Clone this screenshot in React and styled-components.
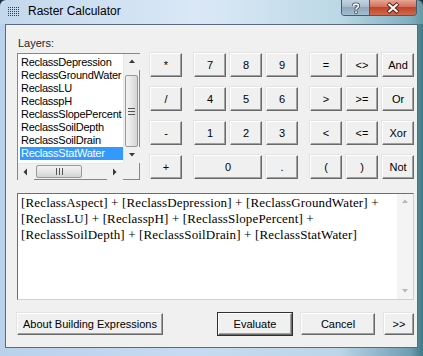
import React from "react";
import styled, { createGlobalStyle } from "styled-components";

const GlobalStyle = createGlobalStyle`
  html, body {
    margin: 0;
    padding: 0;
    background: #1c3440;
  }
  body {
    font-family: "Liberation Sans", Arial, sans-serif;
  }
`;

const layers = [
  "ReclassDepression",
  "ReclassGroundWater",
  "ReclassLU",
  "ReclasspH",
  "ReclassSlopePercent",
  "ReclassSoilDepth",
  "ReclassSoilDrain",
  "ReclassStatWater",
];

const mathKeys = ["*", "/", "-", "+"];
const numberKeys = [
  { label: "7" }, { label: "8" }, { label: "9" },
  { label: "4" }, { label: "5" }, { label: "6" },
  { label: "1" }, { label: "2" }, { label: "3" },
  { label: "0", span: 2 }, { label: "." },
];
const logicKeys = ["=", "<>", "And", ">", ">=", "Or", "<", "<=", "Xor", "(", ")", "Not"];

const expression =
  "[ReclassAspect] + [ReclassDepression] + [ReclassGroundWater] + [ReclassLU] + [ReclasspH] + [ReclassSlopePercent] + [ReclassSoilDepth] + [ReclassSoilDrain] + [ReclassStatWater]";

class App extends React.Component {
  render() {
    return (
      <>
        <GlobalStyle />
        <Window>
          <TitleBar>
            <TitleIcon viewBox="0 0 12 11">
              {[0, 1, 2, 3, 4].map((r) =>
                [0, 1, 2, 3, 4, 5].map((c) => (
                  <rect key={r + "-" + c} x={c * 2} y={r * 2 + 1} width="1" height="1" fill="#3c3c3c" />
                ))
              )}
            </TitleIcon>
            <TitleText>Raster Calculator</TitleText>
            <CaptionButtons>
              <HelpButton>
                <svg width="12" height="12" viewBox="0 0 12 12">
                  <path
                    d="M3.5 4 C3.5 1.5 8.5 1.5 8.5 4 C8.5 5.6 6 5.6 6 7.5"
                    fill="none"
                    stroke="#3a4a5c"
                    strokeWidth="3.2"
                  />
                  <rect x="4.4" y="8.6" width="3.2" height="3" fill="#3a4a5c" />
                  <path
                    d="M3.5 4 C3.5 1.5 8.5 1.5 8.5 4 C8.5 5.6 6 5.6 6 7.5"
                    fill="none"
                    stroke="#fff"
                    strokeWidth="1.6"
                  />
                  <rect x="5.2" y="9.2" width="1.6" height="1.8" fill="#fff" />
                </svg>
              </HelpButton>
              <CloseButton>
                <svg width="14" height="12" viewBox="0 0 14 12">
                  <path d="M2 1.5 L12 10.5 M12 1.5 L2 10.5" stroke="#5a1a10" strokeWidth="4" />
                  <path d="M2.5 2 L11.5 10 M11.5 2 L2.5 10" stroke="#fff" strokeWidth="2.2" />
                </svg>
              </CloseButton>
            </CaptionButtons>
          </TitleBar>
          <FrameBody>
            <Client>
              <FieldLabel>Layers:</FieldLabel>
              <TopSection>
                <ListBox>
                  <ListItems>
                    {layers.map((name, i) => (
                      <ListItem key={name} $selected={i === layers.length - 1}>
                        {name}
                      </ListItem>
                    ))}
                  </ListItems>
                  <VScroll>
                    <ArrowBox>
                      <Arrow dir="up" />
                    </ArrowBox>
                    <VTrack>
                      <VThumb>
                        <GripV />
                      </VThumb>
                    </VTrack>
                    <ArrowBox>
                      <Arrow dir="down" />
                    </ArrowBox>
                  </VScroll>
                  <HScroll>
                    <ArrowBox>
                      <Arrow dir="left" />
                    </ArrowBox>
                    <HTrack>
                      <HThumb>
                        <GripH />
                      </HThumb>
                    </HTrack>
                    <ArrowBox>
                      <Arrow dir="right" />
                    </ArrowBox>
                  </HScroll>
                  <Corner />
                </ListBox>
                <KeyPad>
                  <KeyGroup $cols={1}>
                    {mathKeys.map((k) => (
                      <Key key={k}>{k}</Key>
                    ))}
                  </KeyGroup>
                  <KeyGroup $cols={3}>
                    {numberKeys.map((k) => (
                      <Key key={k.label} $span={k.span}>
                        {k.label}
                      </Key>
                    ))}
                  </KeyGroup>
                  <KeyGroup $cols={3}>
                    {logicKeys.map((k) => (
                      <Key key={k}>{k}</Key>
                    ))}
                  </KeyGroup>
                </KeyPad>
              </TopSection>
              <ExpressionBox>
                <ExpressionText>{expression}</ExpressionText>
                <TextScroll>
                  <ArrowBox $flat>
                    <Arrow dir="up" color="#b8b8b8" />
                  </ArrowBox>
                  <ArrowBox $flat>
                    <Arrow dir="down" color="#b8b8b8" />
                  </ArrowBox>
                </TextScroll>
              </ExpressionBox>
              <ButtonRow>
                <DialogButton $width={146}>About Building Expressions</DialogButton>
                <Spacer />
                <DialogButton $width={74} $default>Evaluate</DialogButton>
                <DialogButton $width={74}>Cancel</DialogButton>
                <DialogButton $width={30}>&gt;&gt;</DialogButton>
              </ButtonRow>
            </Client>
          </FrameBody>
        </Window>
      </>
    );
  }
}

function Arrow({ dir, color = "#3a3a3a" }) {
  const paths = {
    up: "M1 5 L4 1.5 L7 5 Z",
    down: "M1 2 L4 5.5 L7 2 Z",
    left: "M5 0.5 L1.5 4 L5 7.5 Z",
    right: "M2 0.5 L5.5 4 L2 7.5 Z",
  };
  return (
    <svg width="8" height="8" viewBox="0 0 8 8">
      <path d={paths[dir]} fill={color} />
    </svg>
  );
}

const Window = styled.div`
  width: 423px;
  height: 356px;
  display: flex;
  flex-direction: column;
  background: linear-gradient(90deg, #b9d1ea 0%, #c6dbf1 45%, #bcd6e8 80%, #6f9db3 97%, #3f7a86 100%);
  border-radius: 6px 6px 0 0;
  overflow: hidden;
`;

const TitleBar = styled.div`
  height: 24px;
  display: flex;
  align-items: flex-start;
  flex-shrink: 0;
  background: linear-gradient(90deg, rgba(255,255,255,0.15) 0%, rgba(255,255,255,0.35) 50%, rgba(150,200,210,0.4) 100%);
`;

const TitleIcon = styled.svg`
  width: 12px;
  height: 11px;
  margin: 6px 0 0 8px;
`;

const TitleText = styled.div`
  margin: 4px 0 0 8px;
  font-family: "Liberation Sans", Arial, sans-serif;
  font-size: 12px;
  line-height: 15px;
  color: #000;
`;

const CaptionButtons = styled.div`
  margin-left: auto;
  margin-right: 6px;
  display: flex;
  height: 15px;
  border: 1px solid #4a5a6e;
  border-top: none;
  border-radius: 0 0 4px 4px;
  overflow: hidden;
`;

const HelpButton = styled.div`
  width: 27px;
  display: flex;
  align-items: center;
  justify-content: center;
  background: linear-gradient(180deg, #c5d4e2 0%, #a9bccf 45%, #8ea6ba 50%, #a4c0cf 100%);
  border-right: 1px solid #4a5a6e;
`;

const CloseButton = styled.div`
  width: 46px;
  display: flex;
  align-items: center;
  justify-content: center;
  background: linear-gradient(180deg, #e8a493 0%, #d2735c 45%, #c0432a 50%, #d06a4c 100%);
`;

const FrameBody = styled.div`
  flex: 1;
  display: flex;
  padding: 0 7px 8px 5px;
  min-height: 0;
`;

const Client = styled.div`
  flex: 1;
  display: flex;
  flex-direction: column;
  background: #f0f0f0;
  border: 1px solid #5b6b7e;
  padding: 12px 3px 12px 11px;
  font-family: "Liberation Sans", Arial, sans-serif;
  font-size: 11px;
  color: #000;
`;

const FieldLabel = styled.div`
  height: 13px;
  line-height: 13px;
  margin: 0 0 3px 1px;
  color: #1e1e1e;
`;

const TopSection = styled.div`
  display: flex;
  height: 127px;
`;

const ListBox = styled.div`
  width: 123px;
  height: 127px;
  box-sizing: border-box;
  border: 1px solid #828790;
  background: #fff;
  display: grid;
  grid-template-columns: 1fr 16px;
  grid-template-rows: 1fr 16px;
`;

const ListItems = styled.div`
  padding: 2px 0 0 2px;
  overflow: hidden;
`;

const ListItem = styled.div`
  height: 13px;
  line-height: 13px;
  padding-left: 1px;
  white-space: nowrap;
  font-size: 11px;
  letter-spacing: -0.25px;
  background: ${(p) => (p.$selected ? "#3399ff" : "transparent")};
  color: ${(p) => (p.$selected ? "#fff" : "#000")};
`;

const VScroll = styled.div`
  display: flex;
  flex-direction: column;
  background: #f0f0f0;
  border-left: 1px solid #e8e8e8;
`;

const ArrowBox = styled.div`
  height: 16px;
  width: 16px;
  flex-shrink: 0;
  display: flex;
  align-items: center;
  justify-content: center;
  background: ${(p) => (p.$flat ? "#f4f4f4" : "#f0f0f0")};
`;

const VTrack = styled.div`
  flex: 1;
  padding: 5px 0 0 0;
  display: flex;
  justify-content: center;
`;

const VThumb = styled.div`
  width: 13px;
  height: 72px;
  box-sizing: border-box;
  border: 1px solid #999;
  border-radius: 2px;
  background: linear-gradient(90deg, #f3f3f3 0%, #e6e6e6 50%, #d4d4d4 100%);
  display: flex;
  align-items: center;
  justify-content: center;
`;

const GripV = styled.div`
  width: 7px;
  height: 5px;
  border-top: 1px solid #555;
  border-bottom: 1px solid #555;
  &::after {
    content: "";
    display: block;
    margin-top: 2px;
    border-top: 1px solid #555;
  }
`;

const HScroll = styled.div`
  display: flex;
  background: #f0f0f0;
  border-top: 1px solid #e8e8e8;
`;

const HTrack = styled.div`
  flex: 1;
  display: flex;
  align-items: center;
  padding-left: 2px;
`;

const HThumb = styled.div`
  width: 46px;
  height: 13px;
  box-sizing: border-box;
  border: 1px solid #999;
  border-radius: 2px;
  background: linear-gradient(180deg, #f3f3f3 0%, #e6e6e6 50%, #d4d4d4 100%);
  display: flex;
  align-items: center;
  justify-content: center;
`;

const GripH = styled.div`
  width: 5px;
  height: 7px;
  border-left: 1px solid #555;
  border-right: 1px solid #555;
  &::after {
    content: "";
    display: block;
    margin-left: 2px;
    height: 7px;
    border-left: 1px solid #555;
  }
`;

const Corner = styled.div`
  background: #f0f0f0;
`;

const KeyPad = styled.div`
  display: flex;
  gap: 12px;
  margin-left: 10px;
`;

const KeyGroup = styled.div`
  display: grid;
  grid-template-columns: repeat(${(p) => p.$cols}, 32px);
  grid-auto-rows: 24px;
  column-gap: 4px;
  row-gap: 10px;
`;

const Key = styled.div`
  grid-column: span ${(p) => p.$span || 1};
  display: flex;
  align-items: center;
  justify-content: center;
  background: #f0f0f0;
  border-top: 1px solid #fff;
  border-left: 1px solid #fff;
  border-right: 1px solid #696969;
  border-bottom: 1px solid #696969;
  box-shadow: inset -1px -1px #a0a0a0, -1px -1px #e3e3e3;
  font-size: 11px;
  color: #000;
`;

const ExpressionBox = styled.div`
  margin-top: 13px;
  height: 107px;
  box-sizing: border-box;
  border: 1px solid #6e6e6e;
  border-right-color: #d0d0d0;
  border-bottom-color: #d0d0d0;
  background: #fff;
  display: flex;
`;

const ExpressionText = styled.div`
  flex: 1;
  padding: 1px 3px;
  font-family: "Liberation Serif", "Times New Roman", serif;
  font-size: 13px;
  letter-spacing: 0.15px;
  line-height: 16px;
  color: #000;
`;

const TextScroll = styled.div`
  width: 16px;
  display: flex;
  flex-direction: column;
  justify-content: space-between;
  background: #f4f4f4;
`;

const ButtonRow = styled.div`
  margin-top: 13px;
  display: flex;
  height: 22px;
  gap: 9px;
`;

const Spacer = styled.div`
  flex: 1;
`;

const DialogButton = styled.div`
  width: ${(p) => p.$width}px;
  box-sizing: border-box;
  display: flex;
  align-items: center;
  justify-content: center;
  background: #f0f0f0;
  border-top: 1px solid #fff;
  border-left: 1px solid #fff;
  border-right: 1px solid #696969;
  border-bottom: 1px solid #696969;
  box-shadow: ${(p) =>
    p.$default
      ? "inset -1px -1px #a0a0a0, 0 0 0 1px #303030"
      : "inset -1px -1px #a0a0a0, -1px -1px #e3e3e3"};
  font-size: 11px;
  color: #000;
  white-space: nowrap;
`;

export default App;
